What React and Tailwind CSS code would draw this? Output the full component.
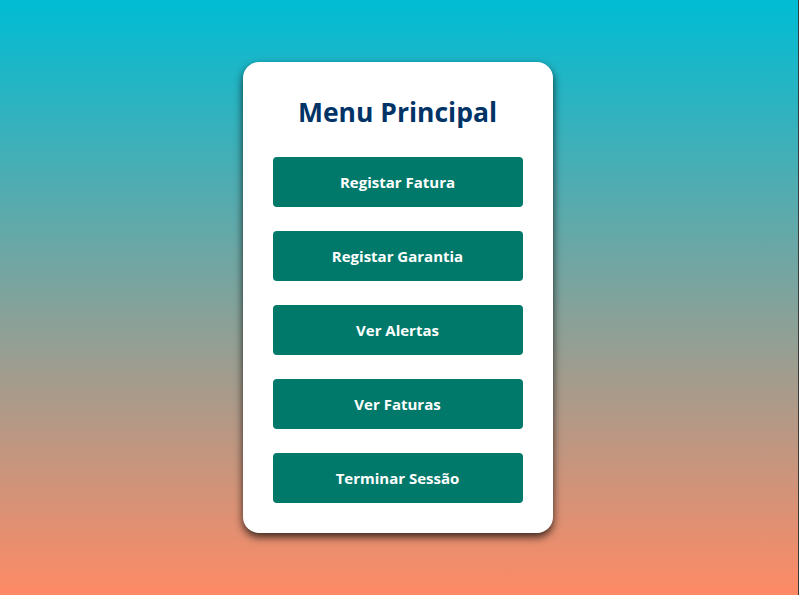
const items = ['Registar Fatura', 'Registar Garantia', 'Ver Alertas', 'Ver Faturas', 'Terminar Sessão']

export default function App() {
  return (
    <div
      className="flex h-[595px] w-full items-center justify-center border-r border-[#3a3a3a] bg-linear-to-b/srgb from-[#00bcd4] to-[#ff8a65]"
      style={{ fontFamily: '"Open Sans", "Noto Sans", sans-serif' }}
    >
      <div className="mr-[3px] w-[310px] rounded-2xl bg-white p-[30px] shadow-[0_4px_9px_rgba(0,0,0,0.75)]">
        <h1 className="mb-[25px] text-center text-[26.5px] font-bold leading-[40px] text-[#003366]">
          Menu Principal
        </h1>
        <div className="flex flex-col gap-[24px]">
          {items.map((label) => (
            <button
              key={label}
              type="button"
              className="h-[50px] w-full rounded bg-[#00796b] text-[15px] font-bold text-white"
            >
              {label}
            </button>
          ))}
        </div>
      </div>
    </div>
  )
}
